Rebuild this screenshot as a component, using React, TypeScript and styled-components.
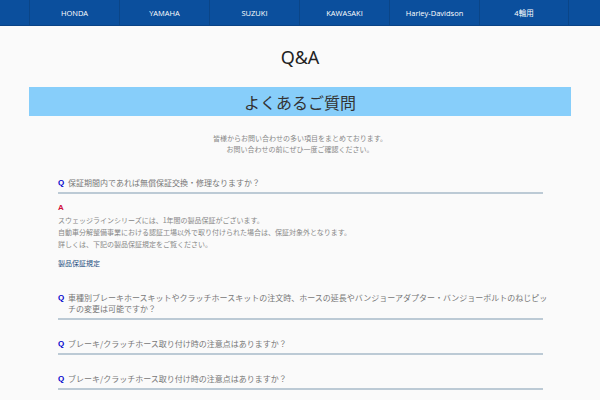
import { createGlobalStyle, styled } from "styled-components"

const GlobalStyle = createGlobalStyle`
  body {
    margin: 0;
    background: #fafafa;
    font-family: "Noto Sans", "Noto Sans CJK JP", sans-serif;
  }
`

const makers = ["HONDA", "YAMAHA", "SUZUKI", "KAWASAKI", "Harley-Davidson", "4輪用"]

type Faq = {
  q: string
  a?: string[]
  link?: string
}

const faqs: Faq[] = [
  {
    q: "保証期間内であれば無償保証交換・修理なりますか？",
    a: [
      "スウェッジラインシリーズには、1年間の製品保証がございます。",
      "自動車分解整備事業における認証工場以外で取り付けられた場合は、保証対象外となります。",
      "詳しくは、下記の製品保証規定をご覧ください。",
    ],
    link: "製品保証規定",
  },
  {
    q: "車種別ブレーキホースキットやクラッチホースキットの注文時、ホースの延長やバンジョーアダプター・バンジョーボルトのねじピッチの変更は可能ですか？",
  },
  { q: "ブレーキ/クラッチホース取り付け時の注意点はありますか？" },
  { q: "ブレーキ/クラッチホース取り付け時の注意点はありますか？" },
]

const S = {
  Nav: styled.nav`
    height: 25px;
    background: #0b4f9d;
    border-bottom: 1px solid #0a4386;
    display: flex;
    justify-content: center;
  `,
  NavList: styled.ul`
    width: 540px;
    margin: 0 0 0 -2px;
    padding: 0;
    list-style: none;
    display: grid;
    grid-template-columns: repeat(6, 1fr);
  `,
  NavItem: styled.li`
    display: flex;
    align-items: center;
    justify-content: center;
    border-left: 1px solid #0a4588;
    color: #ffffff;
    font-family: "Open Sans", "Noto Sans CJK JP", sans-serif;
    font-size: 7.5px;
    font-weight: 400;

    &:last-child {
      border-right: 1px solid #0a4588;
    }
  `,
  Main: styled.main`
    width: 542px;
    margin: 0 auto;
  `,
  Title: styled.h1`
    margin: 0;
    padding-top: 19px;
    text-align: center;
    font-size: 18px;
    line-height: 24px;
    font-weight: 400;
    color: #222;
  `,
  Banner: styled.h2`
    margin: 18px 0 0;
    height: 29px;
    background: #87cefa;
    display: flex;
    align-items: center;
    justify-content: center;
    font-family: "Noto Sans CJK JP", sans-serif;
    font-size: 16px;
    font-weight: 400;
    color: #333;
  `,
  Lead: styled.p`
    margin: 17px 0 0;
    text-align: center;
    font-family: "Noto Sans CJK JP", sans-serif;
    font-size: 7px;
    line-height: 11px;
    color: #888;
  `,
  List: styled.div`
    margin-top: 22px;
    padding: 0 28px 0 29px;
    display: flex;
    flex-direction: column;
    gap: 18px;
  `,
  Item: styled.div``,
  Question: styled.div`
    display: flex;
    gap: 3px;
    padding-bottom: 4px;
    border-bottom: 2px solid #bccad5;
    font-family: "Noto Sans CJK JP", sans-serif;
    font-size: 8px;
    line-height: 11px;
    color: #777;
  `,
  QText: styled.span`
    margin-right: -8px;
    line-break: anywhere;
  `,
  Mark: styled.span<{ $color: string }>`
    flex: none;
    width: 7px;
    font-family: "Liberation Sans", sans-serif;
    font-weight: 700;
    font-size: 8px;
    color: ${({ $color }) => $color};
  `,
  Answer: styled.div`
    padding: 7px 0 5px;
    font-family: "Noto Sans CJK JP", sans-serif;
    font-size: 7px;
    line-height: 12px;
    color: #888;
  `,
  AnswerLine: styled.p`
    margin: 0;
  `,
  Link: styled.a`
    display: block;
    margin-top: 7px;
    color: #1d4f80;
    text-decoration: none;
  `,
}

export default function App() {
  return (
    <>
      <GlobalStyle />
      <S.Nav>
        <S.NavList>
          {makers.map((m) => (
            <S.NavItem key={m}>{m}</S.NavItem>
          ))}
        </S.NavList>
      </S.Nav>
      <S.Main>
        <S.Title>Q&amp;A</S.Title>
        <S.Banner>よくあるご質問</S.Banner>
        <S.Lead>
          皆様からお問い合わせの多い項目をまとめております。
          <br />
          お問い合わせの前にぜひ一度ご確認ください。
        </S.Lead>
        <S.List>
          {faqs.map((f, i) => (
            <S.Item key={i}>
              <S.Question>
                <S.Mark $color="#0000cc">Q</S.Mark>
                <S.QText>{f.q}</S.QText>
              </S.Question>
              {f.a && (
                <S.Answer>
                  <S.Mark $color="#d0103a">A</S.Mark>
                  {f.a.map((line) => (
                    <S.AnswerLine key={line}>{line}</S.AnswerLine>
                  ))}
                  {f.link && <S.Link href="#">{f.link}</S.Link>}
                </S.Answer>
              )}
            </S.Item>
          ))}
        </S.List>
      </S.Main>
    </>
  )
}
